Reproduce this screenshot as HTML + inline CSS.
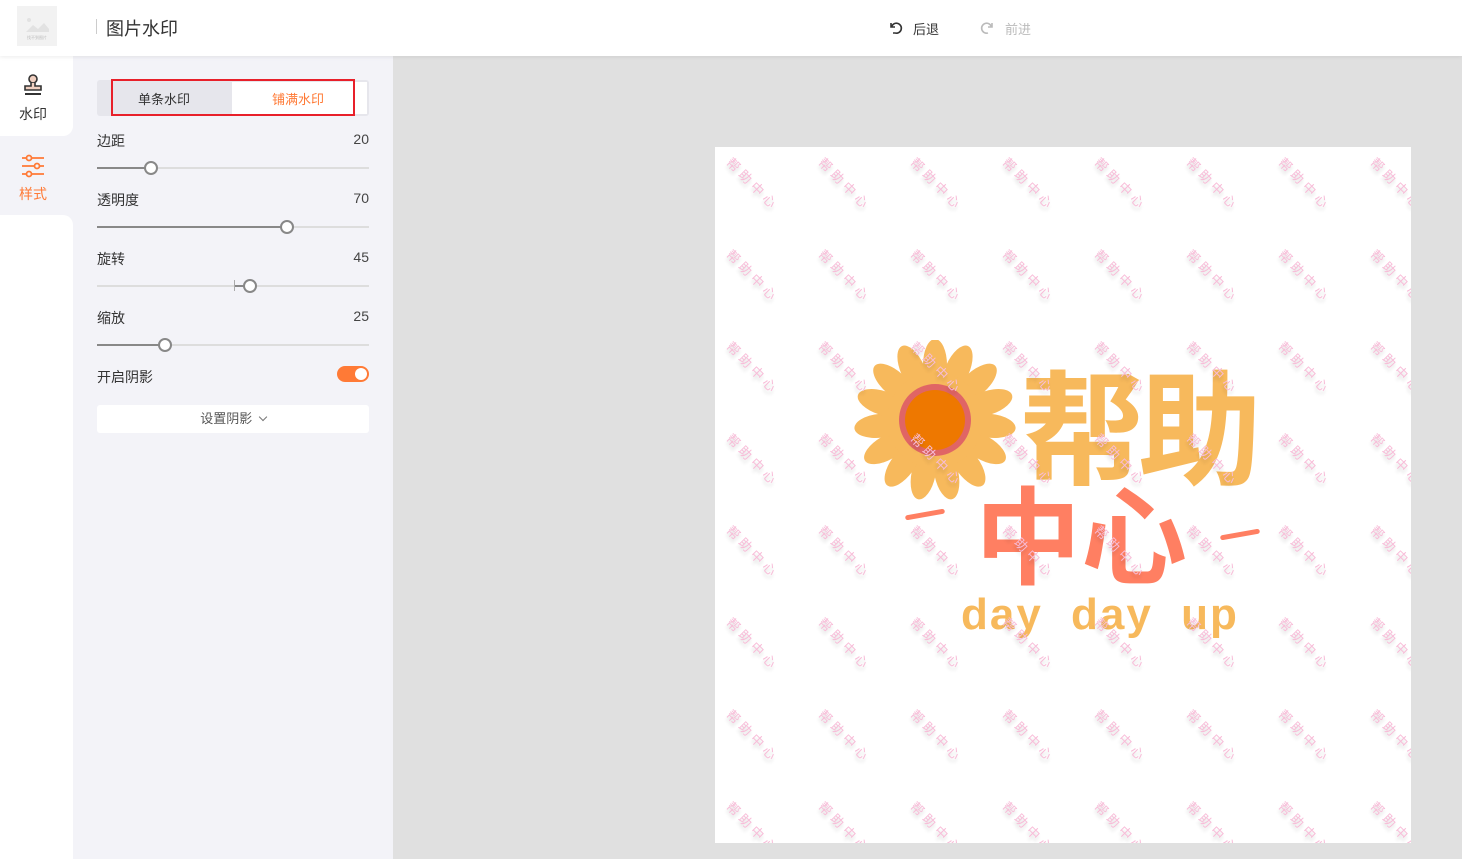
<!DOCTYPE html>
<html><head><meta charset="utf-8"><style>
*{margin:0;padding:0;box-sizing:border-box}
html,body{width:1462px;height:859px;overflow:hidden}
body{background:#e0e0e0;font-family:"Liberation Sans","Noto Sans CJK SC",sans-serif;position:relative;color:#333}
.top{position:absolute;left:0;top:0;width:1462px;height:56px;background:#fff;box-shadow:0 1px 4px rgba(0,0,0,.08);z-index:3}
.logo{position:absolute;left:17px;top:6px;width:40px;height:40px;background:#f2f2f2}
.sep{position:absolute;left:96px;top:19px;width:1px;height:15px;background:#ccc}
.title{position:absolute;left:106px;top:15px;font-size:18px;color:#333}
.nav{position:absolute;left:0;top:56px;width:73px;height:803px;background:#f3f3f8;overflow:hidden}
.tab1{position:absolute;left:0;top:0;width:73px;height:80px;background:#fff;border-radius:0 0 10px 0}
.tab3{position:absolute;left:0;top:159px;width:73px;height:644px;background:#fff;border-radius:0 10px 0 0}
.panel{position:absolute;left:73px;top:56px;width:320px;height:803px;background:#f3f3f8;overflow:hidden}
.lbl{position:absolute;left:24px;font-size:14px;color:#333}
.val{position:absolute;right:24px;font-size:14px;color:#444}
.track{position:absolute;left:24px;width:272px;height:2px;background:#ddd}
.fill{position:absolute;left:0;top:0;height:2px;background:#888}
.knob{position:absolute;top:-6px;width:14px;height:14px;border:2px solid #888;border-radius:50%;background:#fff;margin-left:-7px}
.canvas{position:absolute;left:715px;top:147px;width:696px;height:696px;background:#fff;overflow:hidden}
.wm{position:absolute;left:14px;top:10px;display:grid;grid-template-columns:repeat(8,92px);grid-auto-rows:92px}
.wm i{font-style:normal;display:block;width:80px;transform-origin:0 0;transform:rotate(45deg) translate(2px,-8px);font-size:13px;letter-spacing:4px;color:#f8bcd8;text-shadow:2px 3px 3px rgba(0,0,0,.14);white-space:nowrap}
</style></head><body>
<div class="top">
<div class="logo"><svg width="40" height="40"><path d="M9 26 l7-7 5 4 6-6 5 6 v3z" fill="#e2e2e2"/><circle cx="12" cy="14" r="2" fill="#e2e2e2"/><text x="20" y="33" font-size="4" fill="#bbb" text-anchor="middle">找不到图片</text></svg></div>
<div class="sep"></div><div class="title">图片水印</div>
<svg style="position:absolute;left:888px;top:20px" width="16" height="16" viewBox="0 0 16 16"><path d="M3 3v4h4M3.5 7A5 5 0 1 1 7 13H5" fill="none" stroke="#333" stroke-width="1.6"/></svg>
<div style="position:absolute;left:913px;top:19px;font-size:13px;color:#333">后退</div>
<svg style="position:absolute;left:979px;top:20px" width="16" height="16" viewBox="0 0 16 16"><path d="M13 3v4H9M12.5 7A5 5 0 1 0 9 13" fill="none" stroke="#bbb" stroke-width="1.6"/></svg>
<div style="position:absolute;left:1005px;top:19px;font-size:13px;color:#bbb">前进</div>
</div>
<div class="nav">
<div class="tab1">
<svg style="position:absolute;left:22px;top:17px" width="22" height="24" viewBox="0 0 22 24"><circle cx="11" cy="6" r="4" fill="#f0cfc0" stroke="#333" stroke-width="1.6"/><path d="M9 10v3H3v4h16v-4h-6v-3" fill="#f0cfc0" stroke="#333" stroke-width="1.6"/><path d="M3 21h16" stroke="#333" stroke-width="2"/></svg>
<div style="position:absolute;left:19px;top:48px;font-size:14px;color:#333">水印</div></div>
<svg style="position:absolute;left:21px;top:98px" width="24" height="24" viewBox="0 0 24 24" fill="none" stroke="#ff7a36" stroke-width="1.8"><path d="M1 4h22M1 12h22M1 20h22"/><circle cx="8" cy="4" r="2.5" fill="#f3f3f8"/><circle cx="16" cy="12" r="2.5" fill="#f3f3f8"/><circle cx="8" cy="20" r="2.5" fill="#f3f3f8"/></svg>
<div style="position:absolute;left:19px;top:128px;font-size:14px;color:#ff7a36">样式</div>
<div class="tab3"></div>
</div>
<div class="panel">
<div style="position:absolute;left:24px;top:24px;width:272px;height:36px;background:#e6e6ec;border-radius:3px"></div>
<div style="position:absolute;left:159px;top:26px;width:135px;height:32px;background:#fff"></div>
<div style="position:absolute;left:38px;top:23px;width:244px;height:37px;border:2px solid #e8202a"></div>
<div style="position:absolute;left:65px;top:33px;font-size:13px;color:#333">单条水印</div>
<div style="position:absolute;left:199px;top:33px;font-size:13px;color:#ff7a36">铺满水印</div>
<div class="lbl" style="top:75px">边距</div><div class="val" style="top:75px">20</div>
<div class="track" style="top:111px"><div class="fill" style="width:54px"></div><div class="knob" style="left:54px"></div></div>
<div class="lbl" style="top:134px">透明度</div><div class="val" style="top:134px">70</div>
<div class="track" style="top:170px"><div class="fill" style="width:190px"></div><div class="knob" style="left:190px"></div></div>
<div class="lbl" style="top:193px">旋转</div><div class="val" style="top:193px">45</div>
<div class="track" style="top:229px"><div class="fill" style="left:137px;width:16px"></div><div style="position:absolute;left:137px;top:-5px;width:1px;height:11px;background:#aaa"></div><div class="knob" style="left:153px"></div></div>
<div class="lbl" style="top:252px">缩放</div><div class="val" style="top:252px">25</div>
<div class="track" style="top:288px"><div class="fill" style="width:68px"></div><div class="knob" style="left:68px"></div></div>
<div class="lbl" style="top:311px">开启阴影</div>
<div style="position:absolute;left:264px;top:310px;width:32px;height:16px;border-radius:8px;background:#ff7a36"><div style="position:absolute;right:2px;top:2px;width:12px;height:12px;border-radius:50%;background:#fff"></div></div>
<div style="position:absolute;left:24px;top:349px;width:272px;height:28px;background:#fff;border-radius:3px;text-align:center;font-size:13px;color:#555;line-height:28px">设置阴影 <span style="display:inline-block;width:6px;height:6px;border-right:1px solid #777;border-bottom:1px solid #777;transform:rotate(45deg);margin:0 0 3px 4px"></span></div>
</div>
<div class="canvas">
<svg style="position:absolute;left:138px;top:193px" width="164" height="160" viewBox="-82 -80 164 160">
<g fill="#f7b95c">
<g id="p"><ellipse cx="0" cy="-55" rx="12" ry="26"/></g>
<use href="#p" transform="rotate(24)"/><use href="#p" transform="rotate(48)"/><use href="#p" transform="rotate(72)"/><use href="#p" transform="rotate(96)"/><use href="#p" transform="rotate(120)"/><use href="#p" transform="rotate(144)"/><use href="#p" transform="rotate(168)"/><use href="#p" transform="rotate(192)"/><use href="#p" transform="rotate(216)"/><use href="#p" transform="rotate(240)"/><use href="#p" transform="rotate(264)"/><use href="#p" transform="rotate(288)"/><use href="#p" transform="rotate(312)"/><use href="#p" transform="rotate(336)"/>
<circle r="48"/></g>
<circle r="36" fill="#e06565"/><circle r="30" fill="#ee7800"/></svg>
<div style="position:absolute;left:305px;top:212px;font-size:124px;font-weight:bold;color:#f7b95c;line-height:1;letter-spacing:-6px;font-family:'WenQuanYi Zen Hei','Noto Sans CJK SC',sans-serif">帮助</div>
<div style="position:absolute;left:260px;top:330px;font-size:106px;font-weight:bold;color:#ff7f62;line-height:1;letter-spacing:0;font-family:'WenQuanYi Zen Hei','Noto Sans CJK SC',sans-serif">中心</div>
<div style="position:absolute;left:190px;top:365px;width:40px;height:5px;background:#ff7f62;border-radius:3px;transform:rotate(-10deg)"></div>
<div style="position:absolute;left:505px;top:385px;width:40px;height:5px;background:#ff7f62;border-radius:3px;transform:rotate(-10deg)"></div>
<div style="position:absolute;left:246px;top:446px;font-size:44px;font-weight:bold;color:#f7b95c;letter-spacing:2px;word-spacing:14px;line-height:1">day day up</div>
<div class="wm">
<i>帮助中心</i><i>帮助中心</i><i>帮助中心</i><i>帮助中心</i><i>帮助中心</i><i>帮助中心</i><i>帮助中心</i><i>帮助中心</i>
<i>帮助中心</i><i>帮助中心</i><i>帮助中心</i><i>帮助中心</i><i>帮助中心</i><i>帮助中心</i><i>帮助中心</i><i>帮助中心</i>
<i>帮助中心</i><i>帮助中心</i><i>帮助中心</i><i>帮助中心</i><i>帮助中心</i><i>帮助中心</i><i>帮助中心</i><i>帮助中心</i>
<i>帮助中心</i><i>帮助中心</i><i>帮助中心</i><i>帮助中心</i><i>帮助中心</i><i>帮助中心</i><i>帮助中心</i><i>帮助中心</i>
<i>帮助中心</i><i>帮助中心</i><i>帮助中心</i><i>帮助中心</i><i>帮助中心</i><i>帮助中心</i><i>帮助中心</i><i>帮助中心</i>
<i>帮助中心</i><i>帮助中心</i><i>帮助中心</i><i>帮助中心</i><i>帮助中心</i><i>帮助中心</i><i>帮助中心</i><i>帮助中心</i>
<i>帮助中心</i><i>帮助中心</i><i>帮助中心</i><i>帮助中心</i><i>帮助中心</i><i>帮助中心</i><i>帮助中心</i><i>帮助中心</i>
<i>帮助中心</i><i>帮助中心</i><i>帮助中心</i><i>帮助中心</i><i>帮助中心</i><i>帮助中心</i><i>帮助中心</i><i>帮助中心</i>
</div>
</div>
</body></html>
